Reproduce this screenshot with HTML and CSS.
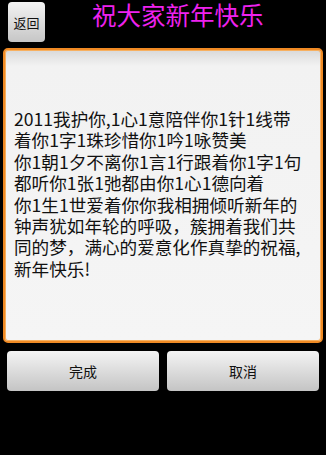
FILE: index.html
```html
<!DOCTYPE html>
<html lang="zh-CN">
<head>
<meta charset="utf-8">
<link rel="stylesheet" href="styles.css">
</head>
<body>
<div class="screen">
  <header class="top">
    <button class="back">返回</button>
    <h1 class="title">祝大家新年快乐</h1>
  </header>
  <div class="editor">
    <p class="msg">2011我护你,1心1意陪伴你1针1线带<br>着你1字1珠珍惜你1吟1咏赞美<br>你1朝1夕不离你1言1行跟着你1字1句<br>都听你1张1弛都由你1心1德向着<br>你1生1世爱着你你我相拥倾听新年的<br>钟声犹如年轮的呼吸，簇拥着我们共<br>同的梦，满心的爱意化作真挚的祝福,<br>新年快乐!</p>
  </div>
  <div class="actions">
    <button class="btn">完成</button>
    <button class="btn">取消</button>
  </div>
</div>
</body>
</html>
```
FILE: styles.css
```css
html, body {
  margin: 0;
  padding: 0;
  background: #000;
}
.screen {
  width: 326px;
  height: 455px;
  font-family: "Noto Sans CJK SC", "Noto Sans", sans-serif;
  display: flex;
  flex-direction: column;
}
.top {
  display: flex;
  align-items: flex-start;
  padding: 2px 0 0 8px;
  height: 40px;
}
.back {
  width: 37px;
  height: 40px;
  border: none;
  border-radius: 4px;
  background: linear-gradient(#f3f3f3, #c6c6c6);
  font-family: inherit;
  font-size: 13px;
  color: #111;
  padding: 0;
}
.title {
  margin: 0 0 0 47px;
  font-size: 24.5px;
  line-height: 26px;
  font-weight: normal;
  color: #ee22ee;
}
.editor {
  margin: 6px 3px 0 3px;
  height: 295px;
  box-sizing: border-box;
  border: 2px solid #f08a24;
  border-radius: 5px;
  background: linear-gradient(#d9d9d9 0px, #f2f2f2 16px, #f5f5f5 100%);
  box-shadow: inset 0 0 0 1px #f7b060;
  display: flex;
  align-items: center;
  padding: 0 9px;
}
.msg {
  margin: -4px 0 0 0;
  font-size: 17.6px;
  line-height: 21.4px;
  color: #111;
  white-space: nowrap;
}
.actions {
  display: flex;
  gap: 8px;
  padding: 0 7px;
  margin-top: 8px;
}
.btn {
  flex: 1;
  height: 40px;
  border: none;
  border-radius: 4px;
  background: linear-gradient(#f4f4f4, #c4c4c4);
  font-family: inherit;
  font-size: 14px;
  color: #111;
  padding: 0;
}
```
